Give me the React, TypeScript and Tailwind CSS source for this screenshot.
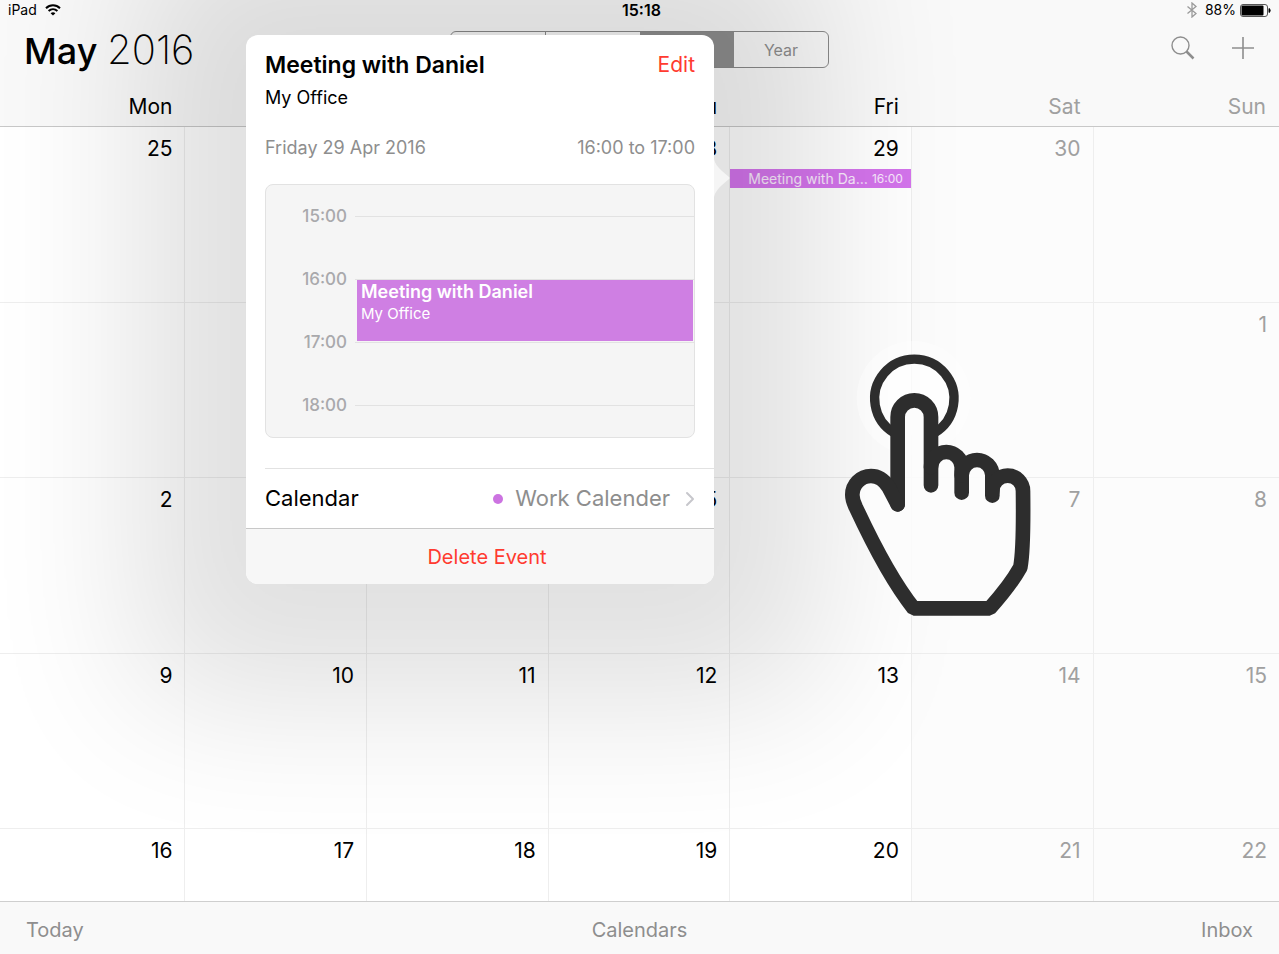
import { ChevronRight } from "lucide-react";

type Day = { num: string; event?: { title: string; time: string } };

const weekdays = ["Mon", "", "", "Thu", "Fri", "Sat", "Sun"];

const weeks: Day[][] = [
  [
    { num: "25" },
    { num: "" },
    { num: "" },
    { num: "28" },
    { num: "29", event: { title: "Meeting with Da…", time: "16:00" } },
    { num: "30" },
    { num: "" },
  ],
  ["", "", "", "", "", "", "1"].map((num) => ({ num })),
  ["2", "", "", "5", "", "7", "8"].map((num) => ({ num })),
  ["9", "10", "11", "12", "13", "14", "15"].map((num) => ({ num })),
  ["16", "17", "18", "19", "20", "21", "22"].map((num) => ({ num })),
];

const hours = ["15:00", "16:00", "17:00", "18:00"];

function WifiIcon() {
  return (
    <svg width="16" height="12" viewBox="0 0 16 12" fill="none" stroke="black" strokeWidth="2">
      <path d="M1 4.2C5 0.3 11 0.3 15 4.2" />
      <path d="M3.6 7C6.2 4.6 9.8 4.6 12.4 7" />
      <path d="M8 11.6L5.6 9.2C7 8 9 8 10.4 9.2Z" fill="black" stroke="none" />
    </svg>
  );
}

function BatteryIcon() {
  return (
    <svg width="31" height="13" viewBox="0 0 31 13" fill="none">
      <rect x="0.5" y="0.5" width="27" height="12" rx="2.5" stroke="#555" />
      <rect x="1.5" y="1.5" width="22" height="10" rx="1" fill="black" />
      <path d="M29 4.5C30.6 5 30.6 8 29 8.5Z" fill="black" stroke="black" />
    </svg>
  );
}

function StatusBar() {
  return (
    <div className="grid h-5 grid-cols-3 items-center px-2 text-sm">
      <div className="flex items-center gap-2">
        <span>iPad</span>
        <WifiIcon />
      </div>
      <span className="pl-1 text-center text-base leading-5 font-semibold">15:18</span>
      <div className="flex items-center justify-end gap-1">
        <svg width="10" height="16" viewBox="0 0 10 16" fill="none" stroke="#9a9a9a" strokeWidth="1.3">
          <path d="M0.5 4.5L9 11.5L5 15V1L9 4.5L0.5 11.5" />
        </svg>
        <span className="pl-1">88%</span>
        <BatteryIcon />
      </div>
    </div>
  );
}

function Toolbar() {
  return (
    <header className="grid h-16 grid-cols-[1fr_auto_1fr] items-start px-6">
      <h1 className="pt-2 text-4xl leading-11 font-medium">
        May <span className="text-[40px] font-extralight">2016</span>
      </h1>
      <div className="mt-[11px] flex h-[37px] w-[379px] overflow-hidden rounded-md border border-[#8a8a8a] text-base text-[#8e8e8e]">
        <button aria-label="Day" className="flex-1 border-r border-[#8a8a8a]" />
        <button aria-label="Week" className="flex-1" />
        <button aria-label="Month" className="flex-1 bg-[#8e8e8e]" />
        <button className="flex-1">Year</button>
      </div>
      <div className="flex justify-end gap-9 pt-4">
        <button aria-label="Search">
          <svg width="24" height="24" viewBox="0 0 24 24" fill="none" stroke="#8e8e8e">
            <circle cx="9.5" cy="9.5" r="8.5" strokeWidth="1.4" />
            <path d="M15.5 15.5L22.5 22.5" strokeWidth="2.5" />
          </svg>
        </button>
        <button aria-label="Add event">
          <svg width="24" height="24" viewBox="0 0 24 24" stroke="#8e8e8e" strokeWidth="1.6">
            <path d="M12 1V23M1 12H23" />
          </svg>
        </button>
      </div>
    </header>
  );
}

function MonthTable() {
  return (
    <div className="min-h-0 flex-1 overflow-hidden">
      <table className="w-full table-fixed border-separate border-spacing-0 text-right text-[21px] leading-7">
        <colgroup>
          <col className="w-[14.5%]" />
          <col className="w-[14.2%]" span={5} />
          <col />
        </colgroup>
        <thead>
          <tr className="h-[43px]">
            {weekdays.map((day, i) => (
              <th
                key={i}
                className={
                  i > 4
                    ? "border-b border-[#c8c8c8] pt-[3px] pr-[13px] font-normal text-[#a0a0a0]"
                    : "border-b border-[#c8c8c8] pt-[3px] pr-[13px] font-normal"
                }
              >
                {day}
              </th>
            ))}
          </tr>
        </thead>
        <tbody>
          {weeks.map((week, w) => (
            <tr key={w} className="odd:h-[176px] even:h-[175px]">
              {week.map((day, i) => (
                <td
                  key={i}
                  className={
                    i > 4
                      ? "border-r border-b border-[#eeeeee] bg-[#fcfcfc] pt-2 align-top text-[#a0a0a0] last:border-r-0"
                      : "border-r border-b border-[#eeeeee] bg-white pt-2 align-top"
                  }
                >
                  <div className="h-7 pr-3">{day.num}</div>
                  {day.event && (
                    <button className="mt-1.5 flex h-[19px] w-full items-center justify-between bg-[#d474ec] pr-2 pl-[18px] text-white/85">
                      <span className="text-sm leading-4">{day.event.title}</span>
                      <span className="text-xs leading-4">{day.event.time}</span>
                    </button>
                  )}
                </td>
              ))}
            </tr>
          ))}
        </tbody>
      </table>
    </div>
  );
}

function EventPopover() {
  return (
    <section className="absolute top-[35px] left-[246px] w-[468px] rounded-xl bg-white shadow-[0_8px_150px_110px_rgba(0,0,0,0.12)]">
      {/* arrow pointing at the event */}
      <svg className="absolute top-[124px] left-full" width="16" height="38" viewBox="0 0 16 38" fill="#f5f5f5">
        <path d="M0 0C1 5 4 8 8 12L15 18Q16 19 15 20L8 26C4 30 1 33 0 38Z" />
      </svg>

      <div className="px-[19px] pt-[15px]">
        <div className="flex items-center justify-between leading-[30px]">
          <h2 className="text-[23px] font-semibold">Meeting with Daniel</h2>
          <button className="text-[21px] text-[#ff3b30]">Edit</button>
        </div>
        <p className="pt-1 text-lg leading-7">My Office</p>
        <div className="flex justify-between pt-[22px] text-lg leading-7 text-[#8e8e8e]">
          <span>Friday 29 Apr 2016</span>
          <span>16:00 to 17:00</span>
        </div>

        <div className="relative mt-[22px] rounded-lg border border-[#e2e2e2] bg-[#f5f5f5]">
          {hours.map((hour) => (
            <div key={hour} className="flex h-[63px] items-center gap-2">
              <span className="w-[81px] text-right text-[17px] font-medium text-[#a9a9ac]">{hour}</span>
              <span className="h-px flex-1 bg-[#e2e2e2]" />
            </div>
          ))}
          <div className="absolute top-[95px] right-px left-[91px] h-[61px] bg-[#cf7fe3] px-1 text-white">
            <p className="text-lg leading-6 font-semibold">Meeting with Daniel</p>
            <p className="text-[15px] leading-5">My Office</p>
          </div>
        </div>
      </div>

      <div className="mt-[30px] ml-[19px] flex h-[60px] items-center justify-between border-t border-[#e2e2e2] pr-3 text-[22px]">
        <span>Calendar</span>
        <button className="flex items-center text-[#8e8e8e]">
          <span className="mr-3 size-[10px] rounded-full bg-[#cc73e1]" />
          Work Calender
          <ChevronRight className="ml-2 text-[#c7c7cc]" size={24} strokeWidth={2} />
        </button>
      </div>
      <button className="block h-14 w-full rounded-b-xl border-t border-[#c8c8c8] bg-[#f7f7f7] pl-3.5 text-xl text-[#ff3b30]">
        Delete Event
      </button>
    </section>
  );
}

function TapHand() {
  return (
    <svg
      className="pointer-events-none absolute top-[330px] left-[820px]"
      width="240"
      height="300"
      viewBox="0 0 720 900"
      fill="none"
      stroke="#2d2d2d"
      strokeWidth="44"
      strokeLinecap="round"
      strokeLinejoin="bevel"
    >
      <circle cx="281" cy="204" r="171" fill="white" fillOpacity="0.4" stroke="none" />
      <circle cx="283" cy="206" r="110" fill="white" fillOpacity="0.5" stroke="none" />
      <path d="M223 309A119 119 0 1 1 343 309" strokeWidth="28" strokeLinecap="butt" />
      <path
        d="M233 523V261A50 50 0 0 1 333 261V412A46 46 0 0 1 425 412V436A46 46 0 0 1 517 436V483A46 46 0 0 1 609 483C610 560 609 670 601 712C580 750 545 795 509 835H281C225 765 160 645 107 531C102 520 97 510 97 495A56 56 0 0 1 153 438C172 438 190 447 205 470Z"
        fill="#fcfcfc"
        fillOpacity="0.9"
        stroke="none"
      />
      <path d="M233 523V261A50 50 0 0 1 333 261V466" />
      <path d="M333 412A46 46 0 0 1 425 412V488" />
      <path d="M425 436A46 46 0 0 1 517 436V497" />
      <path d="M517 483A46 46 0 0 1 609 483C610 560 609 670 601 712C580 750 545 795 509 835H281C225 765 160 645 107 531C102 520 97 510 97 495A56 56 0 0 1 153 438C172 438 190 447 205 470L233 523" />
    </svg>
  );
}

export default function App() {
  return (
    <div className="relative flex h-screen flex-col overflow-hidden bg-[#f9f9f9] font-[Inter,sans-serif] text-black">
      <StatusBar />
      <Toolbar />
      <MonthTable />
      <footer className="grid h-[53px] shrink-0 grid-cols-3 items-center border-t border-[#cfcfcf] bg-[#f9f9f9] px-[26px] pt-1 text-xl text-[#8e8e8e]">
        <button className="text-left">Today</button>
        <button className="text-center">Calendars</button>
        <button className="text-right">Inbox</button>
      </footer>
      <EventPopover />
      <TapHand />
    </div>
  );
}
